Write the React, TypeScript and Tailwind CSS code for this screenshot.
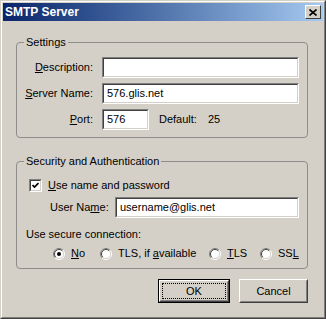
import React from 'react';

const FONT = { fontFamily: '"Liberation Sans", Arial, sans-serif' };

function GroupBox({ title, className, children }: { title: string; className: string; children: React.ReactNode }) {
  return (
    <div className={`relative rounded-[4px] border border-[#8f8d89] ${className}`}>
      <span className="absolute -top-[7px] left-[7px] bg-[#d4d0c8] px-[2px] leading-[13px]">{title}</span>
      {children}
    </div>
  );
}

function TextBox({ value, className }: { value?: string; className: string }) {
  return (
    <div className={`h-[21px] border border-t-[#808080] border-l-[#808080] border-b-white border-r-white ${className}`}>
      <div className="h-full border border-t-[#404040] border-l-[#404040] border-b-[#d4d0c8] border-r-[#d4d0c8] bg-white pl-[3px] leading-[17px]">
        {value}
      </div>
    </div>
  );
}

function Radio({ checked }: { checked?: boolean }) {
  return (
    <svg width="12" height="12" viewBox="0 0 12 12" className="shrink-0">
      <circle cx="6" cy="6" r="5" fill="white" />
      <path d="M2.1 9.9 A5.5 5.5 0 0 1 9.9 2.1" fill="none" stroke="#808080" strokeWidth="1" />
      <path d="M9.9 2.1 A5.5 5.5 0 0 1 2.1 9.9" fill="none" stroke="#ffffff" strokeWidth="1" />
      <path d="M2.8 9.2 A4.5 4.5 0 0 1 9.2 2.8" fill="none" stroke="#404040" strokeWidth="1" />
      <path d="M9.2 2.8 A4.5 4.5 0 0 1 2.8 9.2" fill="none" stroke="#d4d0c8" strokeWidth="1" />
      {checked && <circle cx="6" cy="6" r="2" fill="black" />}
    </svg>
  );
}

export default function App() {
  return (
    <div
      className="h-[319px] w-[326px] border border-t-[#d4d0c8] border-l-[#d4d0c8] border-b-[#404040] border-r-[#404040] bg-[#d4d0c8] text-[11px] text-black"
      style={FONT}
    >
      <div className="h-full border border-t-white border-l-white border-b-[#808080] border-r-[#808080] p-px">
        {/* title bar */}
        <div className="flex h-[18px] items-center bg-gradient-to-r from-[#0a246a] to-[#a6caf0] pl-[2px] pr-[2px]">
          <span className="flex-1 text-[12px] font-bold text-white">SMTP Server</span>
          <div className="flex h-[14px] w-[16px] items-center justify-center border border-t-white border-l-white border-b-[#404040] border-r-[#404040] bg-[#d4d0c8]">
            <svg width="8" height="7" viewBox="0 0 8 7">
              <path d="M0.5 0.5 L7.5 6.5 M7.5 0.5 L0.5 6.5" stroke="black" strokeWidth="1.6" />
            </svg>
          </div>
        </div>

        <div className="ml-[13px] mr-[15px] mt-[21px]">
          <GroupBox title="Settings" className="pt-[14px] pb-[7px]">
            <div className="grid grid-cols-[76px_1fr] items-center gap-x-[9px] gap-y-[5px]">
              <span className="text-right">
                <span className="underline">D</span>escription:
              </span>
              <TextBox className="w-[197px]" />
              <span className="text-right">
                <span className="underline">S</span>erver Name:
              </span>
              <TextBox value="576.glis.net" className="w-[197px]" />
              <span className="text-right">
                <span className="underline">P</span>ort:
              </span>
              <div className="flex items-center">
                <TextBox value="576" className="w-[47px]" />
                <span className="ml-[10px]">Default:</span>
                <span className="ml-[11px]">25</span>
              </div>
            </div>
          </GroupBox>

          <GroupBox title="Security and Authentication" className="mt-[23px] pt-[17px] pb-[8px]">
            <div className="flex h-[13px] items-center pl-[12px]">
              <div className="flex h-[13px] w-[13px] items-center justify-center border border-t-[#808080] border-l-[#808080] border-b-white border-r-white">
                <div className="flex h-full w-full items-center justify-center border border-t-[#404040] border-l-[#404040] border-b-[#d4d0c8] border-r-[#d4d0c8] bg-white">
                  <svg width="7" height="7" viewBox="0 0 7 7">
                    <path d="M0.5 3 L2.5 5 L6.5 1" fill="none" stroke="black" strokeWidth="1.7" />
                  </svg>
                </div>
              </div>
              <span className="ml-[6px] leading-[13px]">
                <span className="underline">U</span>se name and password
              </span>
            </div>
            <div className="mt-[5px] flex items-center pl-[33px]">
              <span className="w-[65px]">
                User Na<span className="underline">m</span>e:
              </span>
              <TextBox value="username@glis.net" className="w-[184px]" />
            </div>
            <div className="mt-[10px] pl-[9px] leading-[13px]">Use secure connection:</div>
            <div className="mt-[6px] flex h-[13px] items-center pl-[36px] leading-[13px]">
              <div className="flex w-[47px] items-center">
                <Radio checked />
                <span className="ml-[6px]">
                  <span className="underline">N</span>o
                </span>
              </div>
              <div className="flex w-[109px] items-center">
                <Radio />
                <span className="ml-[6px]">
                  TLS, if <span className="underline">a</span>vailable
                </span>
              </div>
              <div className="flex w-[51px] items-center">
                <Radio />
                <span className="ml-[6px]">
                  <span className="underline">T</span>LS
                </span>
              </div>
              <div className="flex items-center">
                <Radio />
                <span className="ml-[6px]">
                  SS<span className="underline">L</span>
                </span>
              </div>
            </div>
          </GroupBox>

          <div className="mt-[10px] flex justify-end gap-[9px]">
            <div className="h-[24px] w-[72px] border border-black">
              <div className="h-full border border-t-white border-l-white border-b-[#404040] border-r-[#404040]">
                <div className="h-full border border-t-[#d4d0c8] border-l-[#d4d0c8] border-b-[#808080] border-r-[#808080] p-[1px]">
                  <div className="flex h-full items-center justify-center border border-dotted border-black">OK</div>
                </div>
              </div>
            </div>
            <div className="h-[24px] w-[69px] border border-t-white border-l-white border-b-[#404040] border-r-[#404040]">
              <div className="flex h-full items-center justify-center border border-t-[#d4d0c8] border-l-[#d4d0c8] border-b-[#808080] border-r-[#808080]">
                Cancel
              </div>
            </div>
          </div>
        </div>
      </div>
    </div>
  );
}
